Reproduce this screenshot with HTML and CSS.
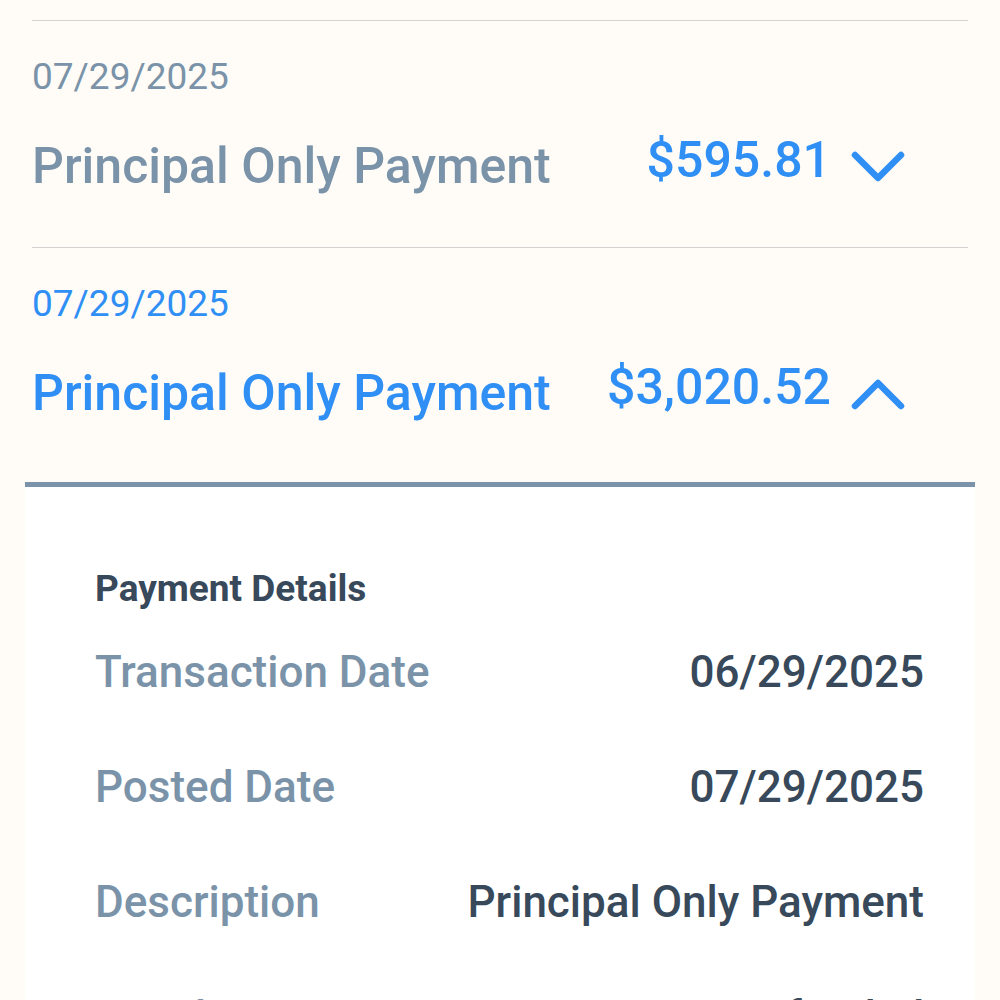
FILE: index.html
```html
<!DOCTYPE html>
<html lang="en">
<head>
<meta charset="utf-8">
<link rel="stylesheet" href="styles.css">
</head>
<body>
<div class="list">
  <div class="item">
    <div class="date">07/29/2025</div>
    <div class="row">
      <div class="title">Principal Only Payment</div>
      <div class="right">
        <div class="amount">$595.81</div>
        <svg class="chev" width="58" height="36" viewBox="0 0 58 36"><path d="M6 6 L29 29 L52 6" fill="none" stroke="#2f8ff5" stroke-width="6.5" stroke-linecap="round" stroke-linejoin="round"/></svg>
      </div>
    </div>
  </div>
  <div class="item open">
    <div class="date">07/29/2025</div>
    <div class="row">
      <div class="title">Principal Only Payment</div>
      <div class="right">
        <div class="amount">$3,020.52</div>
        <svg class="chev" width="58" height="36" viewBox="0 0 58 36"><path d="M6 30 L29 7 L52 30" fill="none" stroke="#2f8ff5" stroke-width="6.5" stroke-linecap="round" stroke-linejoin="round"/></svg>
      </div>
    </div>
  </div>
  <div class="card">
    <div class="card-title">Payment Details</div>
    <div class="drow"><span class="label">Transaction Date</span><span class="value">06/29/2025</span></div>
    <div class="drow"><span class="label">Posted Date</span><span class="value">07/29/2025</span></div>
    <div class="drow"><span class="label">Description</span><span class="value">Principal Only Payment</span></div>
    <div class="drow"><span class="label">Merchant</span><span class="value">Not Refunded</span></div>
  </div>
</div>
</body>
</html>
```
FILE: styles.css
```css
html, body {
  margin: 0;
  padding: 0;
  background: #fffcf7;
  font-family: Roboto, "Liberation Sans", sans-serif;
}
.list {
  padding: 20px 32px 0;
}
.item {
  border-top: 1px solid #d3d3d3;
  padding: 34px 0 51px;
}
.item.open {
  padding-bottom: 59px;
}
.date {
  font-size: 37px;
  line-height: 44px;
  color: #7a93a9;
  margin-bottom: 37px;
}
.row {
  display: flex;
  justify-content: space-between;
  align-items: flex-start;
}
.title {
  font-size: 50px;
  line-height: 60px;
  font-weight: 500;
  color: #7a93a9;
}
.open .date, .open .title {
  color: #2f8ff5;
}
.right {
  display: flex;
  align-items: flex-start;
  margin-right: 61px;
}
.amount {
  font-size: 50px;
  line-height: 48px;
  font-weight: 500;
  color: #2f8ff5;
}
.chev {
  display: block;
  margin-left: 18px;
  margin-top: 13px;
}
.card {
  margin: 0 -7px;
  background: #ffffff;
  border-top: 5px solid #7a93a9;
  padding: 80px 51px 0 70px;
}
.card-title {
  font-size: 37px;
  line-height: 44px;
  font-weight: 700;
  color: #37495a;
  margin-bottom: 3px;
}
.drow {
  display: flex;
  justify-content: space-between;
  align-items: center;
  height: 115px;
  font-size: 44px;
  font-weight: 500;
}
.label {
  color: #7a93a9;
}
.value {
  color: #37495a;
}
```
